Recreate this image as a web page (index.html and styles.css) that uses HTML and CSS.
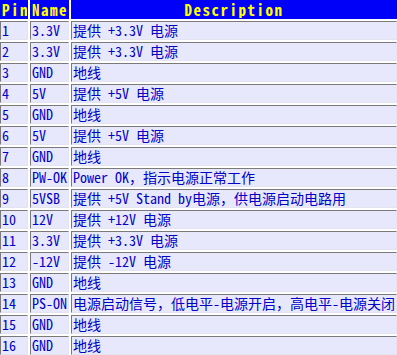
FILE: index.html
```html
<!DOCTYPE html>
<html>
<head>
<meta charset="utf-8">
<link rel="stylesheet" href="styles.css">
</head>
<body>
<table class="pins">
<tr class="head"><th class="c-pin">Pin</th><th class="c-name">Name</th><th class="c-desc">Description</th></tr>
<tr><td>1</td><td>3.3V</td><td>提供 +3.3V 电源</td></tr>
<tr><td>2</td><td>3.3V</td><td>提供 +3.3V 电源</td></tr>
<tr><td>3</td><td>GND</td><td>地线</td></tr>
<tr><td>4</td><td>5V</td><td>提供 +5V 电源</td></tr>
<tr><td>5</td><td>GND</td><td>地线</td></tr>
<tr><td>6</td><td>5V</td><td>提供 +5V 电源</td></tr>
<tr><td>7</td><td>GND</td><td>地线</td></tr>
<tr><td>8</td><td>PW-OK</td><td>Power OK，指示电源正常工作</td></tr>
<tr><td>9</td><td>5VSB</td><td>提供 +5V Stand by电源，供电源启动电路用</td></tr>
<tr><td>10</td><td>12V</td><td>提供 +12V 电源</td></tr>
<tr><td>11</td><td>3.3V</td><td>提供 +3.3V 电源</td></tr>
<tr><td>12</td><td>-12V</td><td>提供 -12V 电源</td></tr>
<tr><td>13</td><td>GND</td><td>地线</td></tr>
<tr><td>14</td><td>PS-ON</td><td>电源启动信号，低电平-电源开启，高电平-电源关闭</td></tr>
<tr><td>15</td><td>GND</td><td>地线</td></tr>
<tr><td>16</td><td>GND</td><td>地线</td></tr>
</table>
</body>
</html>
```

FILE: styles.css
```css
html, body {
  margin: 0;
  padding: 0;
  background: #ffffff;
  overflow: hidden;
}
.pins {
  margin: -2px 0 0 -2px;
  border-collapse: separate;
  border-spacing: 2px;
  table-layout: fixed;
  width: 401px;
  font-family: "Noto Sans Mono CJK SC", "Noto Sans CJK SC", monospace;
  font-size: 14px;
  line-height: 15px;
}
.pins th, .pins td {
  padding: 1px;
  text-align: left;
  vertical-align: middle;
  white-space: nowrap;
  overflow: hidden;
  height: 15px;
}
.pins td {
  background: #e8e8fc;
  color: #0000c8;
  border-style: solid;
  border-width: 1px;
  border-color: #7a7a7a #e4e4f0 #e4e4f0 #7a7a7a;
}
.pins th {
  background: #0000f8;
  color: #ffff00;
  font-weight: bold;
  font-size: 15px;
  letter-spacing: 1.5px;
  border: 1px solid #0000f8;
}
.pins .c-pin { width: 24px; }
.pins .c-name { width: 35px; }
.pins .c-desc { text-align: center; }
```
